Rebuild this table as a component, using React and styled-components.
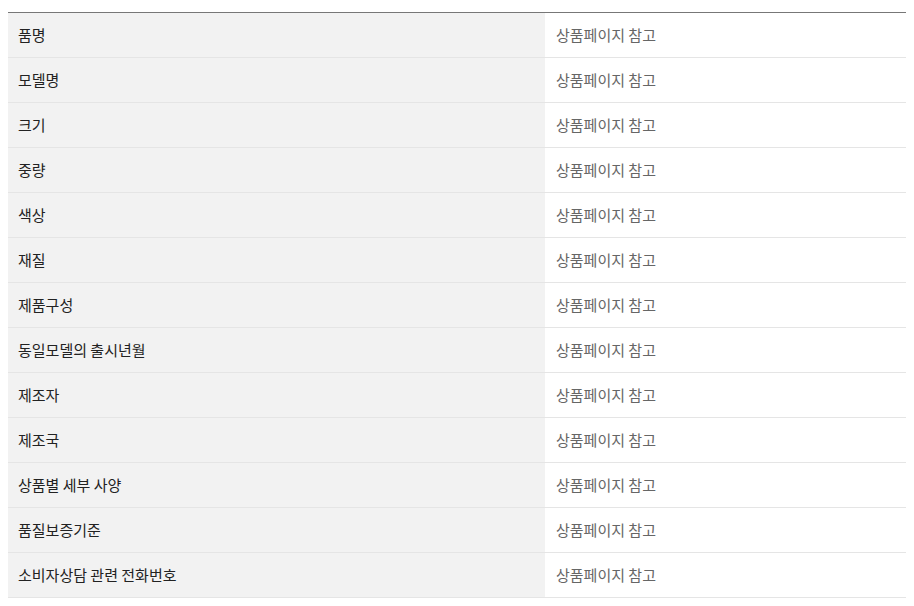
import styled, { createGlobalStyle } from "styled-components";

const GlobalStyle = createGlobalStyle`
  body {
    margin: 0;
    background: #fff;
    font-family: "Noto Sans CJK KR", "Noto Sans", sans-serif;
  }
`;

const Wrapper = styled.div`
  padding: 12px 8px 0;
`;

const InfoTable = styled.table`
  width: 898px;
  border-collapse: collapse;
  border-top: 1px solid #777;
  table-layout: fixed;
`;

const Row = styled.tr`
  border-bottom: 1px solid #e5e5e5;
`;

const Label = styled.th`
  width: 537px;
  height: 45px;
  padding: 0 10px 2px;
  background: #f2f2f2;
  color: #222;
  font-size: 15px;
  font-weight: normal;
  text-align: left;
  box-sizing: border-box;
`;

const Value = styled.td`
  height: 45px;
  padding: 0 11px 2px;
  color: #666;
  font-size: 15px;
  box-sizing: border-box;
`;

const rows = [
  "품명",
  "모델명",
  "크기",
  "중량",
  "색상",
  "재질",
  "제품구성",
  "동일모델의 출시년월",
  "제조자",
  "제조국",
  "상품별 세부 사양",
  "품질보증기준",
  "소비자상담 관련 전화번호",
];

export default function App() {
  return (
    <>
      <GlobalStyle />
      <Wrapper>
        <InfoTable>
          <tbody>
            {rows.map((label) => (
              <Row key={label}>
                <Label>{label}</Label>
                <Value>상품페이지 참고</Value>
              </Row>
            ))}
          </tbody>
        </InfoTable>
      </Wrapper>
    </>
  );
}
